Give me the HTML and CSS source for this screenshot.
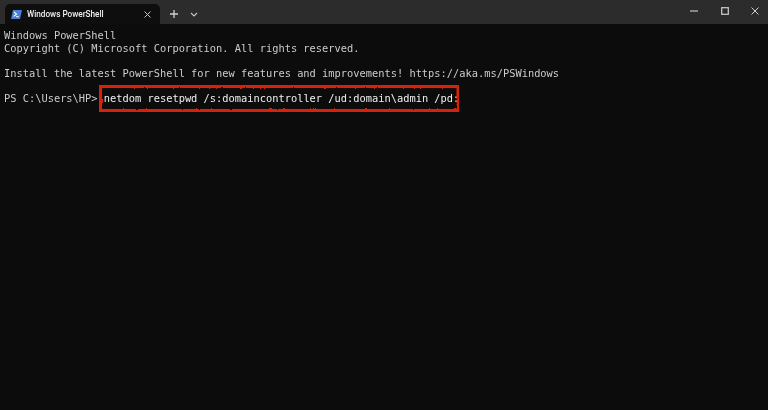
FILE: index.html
```html
<!DOCTYPE html>
<html lang="en">
<head>
<meta charset="utf-8">
<title>Windows PowerShell</title>
<link rel="stylesheet" href="styles.css">
</head>
<body>
<div class="window">
  <header class="titlebar">
    <div class="tab">
      <svg class="ps-icon" width="11" height="9" viewBox="0 0 11 9"><path d="M2 0H11L9 9H0Z" fill="#4a80d8"/><path d="M3 2L5.5 4.2L2.6 6.4" fill="none" stroke="#fff" stroke-width="1.1"/><path d="M5.2 6.6H7.6" stroke="#fff" stroke-width="1.1"/></svg>
      <span class="tab-title">Windows PowerShell</span>
      <svg class="tab-close" width="7" height="7" viewBox="0 0 7 7"><path d="M0.5 0.5L6.5 6.5M6.5 0.5L0.5 6.5" stroke="#c8c8c8" stroke-width="1"/></svg>
    </div>
    <svg class="new-tab" width="8" height="8" viewBox="0 0 8 8"><path d="M4 0V8M0 4H8" stroke="#cfcfcf" stroke-width="1.3"/></svg>
    <svg class="dropdown" width="8" height="5" viewBox="0 0 8 5"><path d="M1 1L4 4L7 1" fill="none" stroke="#c8c8c8" stroke-width="1.1"/></svg>
    <div class="controls">
      <svg width="8" height="8" viewBox="0 0 8 8"><path d="M0 4H8" stroke="#b8b8b8" stroke-width="1.3"/></svg>
      <svg width="8" height="8" viewBox="0 0 8 8"><rect x="0.7" y="0.7" width="6.6" height="6.6" fill="none" stroke="#c4c4c4" stroke-width="1.3"/></svg>
      <svg width="8" height="8" viewBox="0 0 8 8"><path d="M0.5 0.5L7.5 7.5M7.5 0.5L0.5 7.5" stroke="#d0d0d0" stroke-width="1"/></svg>
    </div>
  </header>
  <main class="terminal">
    <pre class="output">Windows PowerShell
Copyright (C) Microsoft Corporation. All rights reserved.

Install the latest PowerShell for new features and improvements! https://aka.ms/PSWindows

PS C:\Users\HP&gt; <span class="cmd">netdom resetpwd /s:domaincontroller /ud:domain\admin /pd:</span></pre>
    <svg class="highlight" width="372" height="39" viewBox="0 0 372 39">
      <filter id="rough" x="0" y="0" width="100%" height="100%">
        <feTurbulence type="fractalNoise" baseFrequency="0.35" numOctaves="2" seed="4"/>
        <feDisplacementMap in="SourceGraphic" scale="2.4" xChannelSelector="R" yChannelSelector="G"/>
      </filter>
      <rect x="6.75" y="6.75" width="359" height="25.5" fill="none" stroke="#d4220c" stroke-width="4.6" filter="url(#rough)"/>
    </svg>
  </main>
</div>
</body>
</html>
```

FILE: styles.css
```css
html, body {
  margin: 0;
  padding: 0;
  background: #0c0c0c;
}
.window {
  width: 768px;
  height: 410px;
  display: flex;
  flex-direction: column;
  overflow: hidden;
  filter: blur(0.35px);
}
.titlebar {
  height: 24px;
  flex: none;
  background: #2c2c2c;
  display: flex;
  align-items: center;
  padding-left: 5px;
}
.tab {
  width: 155px;
  height: 20px;
  margin-top: 4px;
  box-sizing: border-box;
  padding: 0 9px 0 6px;
  background: #0e0e0e;
  border-radius: 5px 5px 0 0;
  display: flex;
  align-items: center;
}
.tab-title {
  margin-left: 5px;
  flex: 1;
  font: 500 8.2px/1 Roboto, "Noto Sans", sans-serif;
  color: #f0f0f0;
}
.new-tab {
  margin: 4px 0 0 10px;
}
.dropdown {
  margin: 4px 0 0 12px;
}
.controls {
  margin-left: auto;
  display: flex;
  gap: 22.5px;
  padding-right: 9px;
  margin-top: -2px;
}
.terminal {
  position: relative;
  flex: 1;
  background: #0c0c0c;
  padding: 5px 4px;
}
.output {
  margin: 0;
  font: 10.37px/12.6px "DejaVu Sans Mono", "Liberation Mono", monospace;
  color: #cccccc;
}
.cmd {
  color: #f0f0f0;
}
.highlight {
  position: absolute;
  left: 93px;
  top: 55px;
}
```
